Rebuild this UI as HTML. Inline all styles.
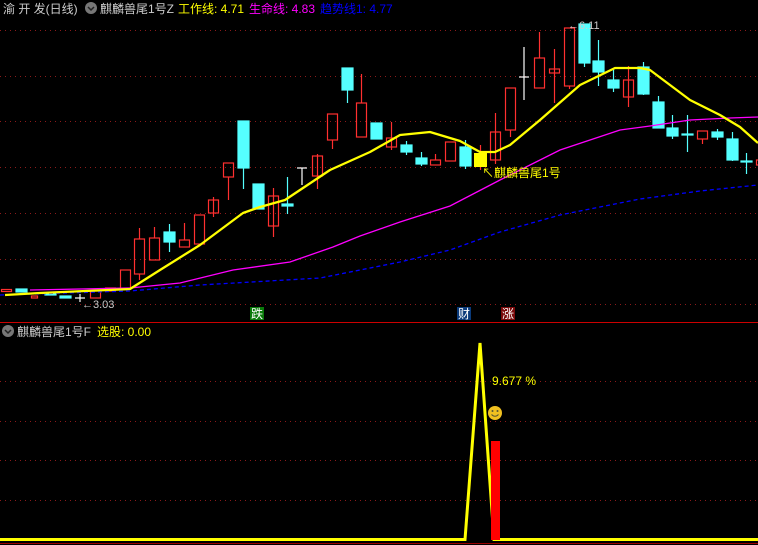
<!DOCTYPE html>
<html><head><meta charset="utf-8"><style>
body{margin:0;background:#000;width:758px;height:545px;overflow:hidden;font-family:"Liberation Sans","Noto Sans CJK SC",sans-serif}
svg{position:absolute;left:0;top:0}
text{font-family:"Liberation Sans","Noto Sans CJK SC",sans-serif}
</style></head><body>
<svg width="758" height="545" viewBox="0 0 758 545">
<g stroke="#8b1a1a" stroke-dasharray="1 4" stroke-width="1">
<line x1="0" y1="30.5" x2="758" y2="30.5"/><line x1="0" y1="76.5" x2="758" y2="76.5"/>
<line x1="0" y1="121.5" x2="758" y2="121.5"/><line x1="0" y1="167.5" x2="758" y2="167.5"/>
<line x1="0" y1="213.5" x2="758" y2="213.5"/><line x1="0" y1="259.5" x2="758" y2="259.5"/>
<line x1="0" y1="304.5" x2="758" y2="304.5"/>
<line x1="0" y1="381.5" x2="758" y2="381.5"/><line x1="0" y1="421.5" x2="758" y2="421.5"/>
<line x1="0" y1="460.5" x2="758" y2="460.5"/><line x1="0" y1="500.5" x2="758" y2="500.5"/>
</g>
<line x1="0" y1="322.5" x2="758" y2="322.5" stroke="#c00" stroke-width="1"/>
<line x1="0" y1="543.5" x2="758" y2="543.5" stroke="#900" stroke-width="1"/>
<g stroke-width="1.2">
<g fill="none" stroke="#ff3030">
<rect x="1.5" y="289.5" width="10" height="2"/>
<rect x="31.5" y="296" width="6" height="2"/>
<rect x="90.5" y="291" width="10" height="7"/>
<rect x="105.5" y="288" width="10" height="3"/>
<rect x="120.5" y="270" width="10" height="19"/>
<rect x="134.5" y="239" width="10" height="35"/><line x1="139.5" y1="228" x2="139.5" y2="239"/><line x1="139.5" y1="274" x2="139.5" y2="280"/>
<rect x="149.5" y="238" width="10" height="22"/><line x1="154.5" y1="227" x2="154.5" y2="238"/>
<rect x="179.5" y="240" width="10" height="7"/><line x1="184.5" y1="223" x2="184.5" y2="240"/>
<rect x="194.5" y="215" width="10" height="29"/>
<rect x="208.5" y="200" width="10" height="13"/><line x1="213.5" y1="197" x2="213.5" y2="217"/>
<rect x="223.5" y="163" width="10" height="14"/><line x1="228.5" y1="177" x2="228.5" y2="200"/>
<rect x="268.5" y="196" width="10" height="30"/><line x1="273.5" y1="188" x2="273.5" y2="237"/>
<rect x="312.5" y="156" width="10" height="20"/><line x1="317.5" y1="154" x2="317.5" y2="189"/>
<rect x="327.5" y="114" width="10" height="26"/><line x1="332.5" y1="140" x2="332.5" y2="149"/>
<rect x="356.5" y="103" width="10" height="34"/><line x1="361.5" y1="74" x2="361.5" y2="103"/>
<rect x="386.5" y="138" width="10" height="9"/><line x1="391.5" y1="122" x2="391.5" y2="150"/>
<rect x="430.5" y="160" width="10" height="5"/><line x1="435.5" y1="154" x2="435.5" y2="160"/>
<rect x="445.5" y="142" width="10" height="19"/>
<line x1="480.5" y1="145" x2="480.5" y2="170"/>
<rect x="490.5" y="132" width="10" height="28"/><line x1="495.5" y1="113" x2="495.5" y2="164"/>
<rect x="505.5" y="88" width="10" height="42"/><line x1="510.5" y1="130" x2="510.5" y2="137"/>
<rect x="534.5" y="58" width="10" height="30"/><line x1="539.5" y1="32" x2="539.5" y2="58"/>
<rect x="549.5" y="69" width="10" height="4"/><line x1="554.5" y1="49" x2="554.5" y2="103"/>
<rect x="564.5" y="28" width="10" height="58"/><line x1="569.5" y1="86" x2="569.5" y2="89"/>
<rect x="623.5" y="80" width="10" height="17"/><line x1="628.5" y1="66" x2="628.5" y2="107"/>
<rect x="697.5" y="131" width="10" height="8"/><line x1="702.5" y1="139" x2="702.5" y2="144"/>
<rect x="756.5" y="160" width="10" height="5"/>
</g>
<g fill="#55ffff" stroke="#55ffff">
<rect x="16" y="289" width="11" height="3"/>
<rect x="45" y="293" width="11" height="2"/>
<rect x="60" y="296" width="11" height="2"/>
<rect x="164" y="232" width="11" height="10"/><line x1="169.5" y1="224" x2="169.5" y2="252"/>
<rect x="238" y="121" width="11" height="47"/><line x1="243.5" y1="168" x2="243.5" y2="189"/>
<rect x="253" y="184" width="11" height="25"/>
<rect x="282" y="204" width="11" height="2"/><line x1="287.5" y1="177" x2="287.5" y2="214"/>
<rect x="342" y="68" width="11" height="22"/><line x1="347.5" y1="90" x2="347.5" y2="103"/>
<rect x="371" y="123" width="11" height="16"/>
<rect x="401" y="145" width="11" height="7"/><line x1="406.5" y1="141" x2="406.5" y2="155"/>
<rect x="416" y="158" width="11" height="6"/><line x1="421.5" y1="152" x2="421.5" y2="166"/>
<rect x="460" y="147" width="11" height="19"/><line x1="465.5" y1="140" x2="465.5" y2="169"/>
<rect x="579" y="24" width="11" height="39"/><line x1="584.5" y1="63" x2="584.5" y2="67"/>
<rect x="593" y="61" width="11" height="11"/><line x1="598.5" y1="40" x2="598.5" y2="86"/>
<rect x="608" y="80" width="11" height="8"/><line x1="613.5" y1="70" x2="613.5" y2="92"/>
<rect x="638" y="67" width="11" height="27"/><line x1="643.5" y1="62" x2="643.5" y2="95"/>
<rect x="653" y="102" width="11" height="26"/><line x1="658.5" y1="96" x2="658.5" y2="102"/>
<rect x="667" y="128" width="11" height="8"/><line x1="672.5" y1="115" x2="672.5" y2="139"/>
<rect x="682" y="134" width="11" height="1"/><line x1="687.5" y1="115" x2="687.5" y2="152"/>
<rect x="712" y="132" width="11" height="5"/><line x1="717.5" y1="129" x2="717.5" y2="140"/>
<rect x="727" y="139" width="11" height="21"/><line x1="732.5" y1="132" x2="732.5" y2="161"/>
<rect x="741" y="161" width="11" height="1"/><line x1="746.5" y1="153" x2="746.5" y2="174"/>
</g>
<g stroke="#fff">
<line x1="75" y1="298" x2="85" y2="298"/><line x1="80" y1="294" x2="80" y2="302"/>
<line x1="297" y1="168" x2="307" y2="168"/><line x1="302" y1="168" x2="302" y2="185"/>
<line x1="519" y1="77" x2="529" y2="77"/><line x1="524" y1="47" x2="524" y2="100"/>
</g>
<rect x="474" y="153" width="13" height="14" fill="#ffff00"/>
</g>
<polyline fill="none" stroke="#0000ff" stroke-width="1.3" stroke-dasharray="4 3" points="0,295 130,291 200,285 320,278 400,262 450,250 500,232 560,215 640,199 700,191 758,185"/>
<polyline fill="none" stroke="#ff00ff" stroke-width="1.3" points="30,290 130,288 180,283 233,270 290,262 333,247 360,236 400,222 450,206 500,180 560,150 620,130 650,126 690,120 730,118 758,117"/>
<polyline fill="none" stroke="#ffff00" stroke-width="2.3" stroke-linejoin="round" points="5,295 40,293 130,289 160,270 200,245 243,213 260,207 285,200 300,190 330,170 370,152 400,135 430,132 460,141 480,152 495,152 510,145 540,120 580,85 615,68 640,68 650,70 670,85 690,100 720,115 740,127 758,143"/>
<text x="82" y="308" fill="#ccc" font-size="11">←3.03</text>
<text x="568" y="29" fill="#ccc" font-size="11">←6.11</text>
<text x="482" y="177" fill="#ffff00" font-size="12">↖麒麟兽尾1号</text>
<rect x="250" y="307" width="14" height="13" fill="#0a7a0a"/><text x="251" y="318" fill="#fff" font-size="12">跌</text>
<rect x="457" y="307" width="14" height="13" fill="#0a3a7a"/><text x="458" y="318" fill="#fff" font-size="12">财</text>
<rect x="501" y="307" width="14" height="13" fill="#7a0a0a"/><text x="502" y="318" fill="#fff" font-size="12">涨</text>
<polyline fill="none" stroke="#ffff00" stroke-width="3" points="0,539.5 465,539.5 480,343 494,539.5 758,539.5"/>
<rect x="491" y="441" width="9" height="99" fill="#ff0000"/>
<text x="492" y="385" fill="#ffff00" font-size="12">9.677 %</text>
<circle cx="495" cy="413" r="7" fill="#f0c020"/>
<circle cx="492.5" cy="411" r="1" fill="#553"/><circle cx="497.5" cy="411" r="1" fill="#553"/>
<path d="M491.5 414.5 Q495 418 498.5 414.5" stroke="#553" fill="none" stroke-width="1"/>
<text x="3" y="13" font-size="12" fill="#ccc">渝 开 发(日线)</text>
<circle cx="91" cy="8" r="6" fill="#777"/><path d="M88 7 L91 10 L94 7" stroke="#222" stroke-width="1.5" fill="none"/>
<text x="100" y="13" font-size="12" fill="#ccc">麒麟兽尾1号Z</text>
<text x="178" y="13" font-size="12" fill="#ffff00">工作线: 4.71</text>
<text x="249" y="13" font-size="12" fill="#ff00ff">生命线: 4.83</text>
<text x="320" y="13" font-size="12" fill="#0000ff">趋势线1: 4.77</text>
<circle cx="8" cy="331" r="6" fill="#777"/><path d="M5 330 L8 333 L11 330" stroke="#222" stroke-width="1.5" fill="none"/>
<text x="17" y="336" font-size="12" fill="#ccc">麒麟兽尾1号F</text>
<text x="97" y="336" font-size="12" fill="#ffff00">选股: 0.00</text>
</svg>
</body></html>
